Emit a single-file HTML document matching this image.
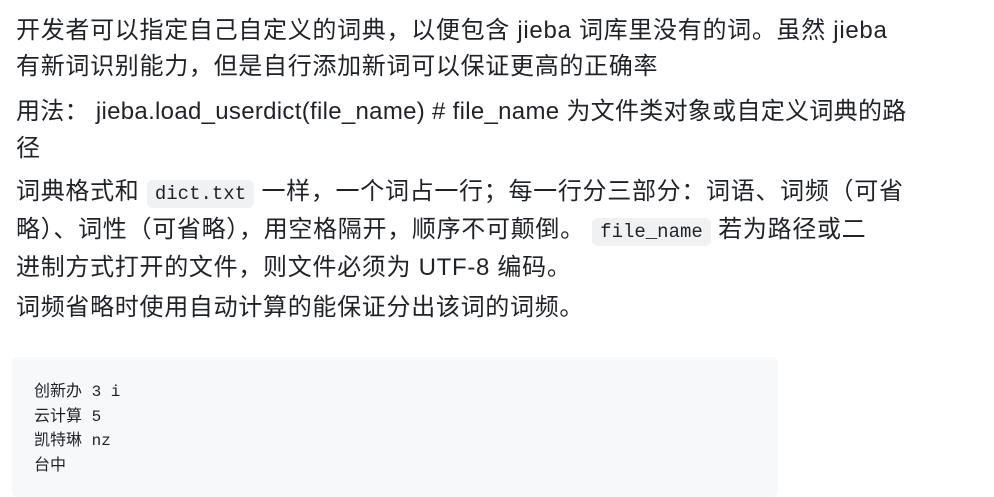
<!DOCTYPE html>
<html><head><meta charset="utf-8"><style>
body{margin:0;background:#fff;width:994px;height:489px;overflow:hidden;position:relative;font-family:"Liberation Sans","Noto Sans CJK SC",sans-serif;color:#1f2328;font-size:24px;}
.l{position:absolute;left:16px;white-space:nowrap;line-height:37px;height:37px;letter-spacing:0.7px;}
code{font-family:"Liberation Mono","Noto Sans CJK SC",monospace;font-size:19px;background:#eff1f3;border-radius:6px;padding:3px 8px;letter-spacing:0;}
.pre{position:absolute;left:12px;top:357px;width:766px;height:140px;background:#f6f8fa;border-radius:6px;}
.c{position:absolute;left:34px;font-family:"Liberation Mono","Noto Sans CJK SC",monospace;font-size:16px;line-height:24.5px;white-space:pre;color:#1f2328;}
</style></head><body>
<div class="l" style="top:12px">开发者可以指定自己自定义的词典，以便包含 jieba 词库里没有的词。虽然 jieba</div>
<div class="l" style="top:48px">有新词识别能力，但是自行添加新词可以保证更高的正确率</div>
<div class="l" style="top:93px;letter-spacing:0.3px">用法： jieba.load_userdict(file_name) # file_name 为文件类对象或自定义词典的路</div>
<div class="l" style="top:130px">径</div>
<div class="l" style="top:173px">词典格式和 <code>dict.txt</code> 一样，一个词占一行；每一行分三部分：词语、词频（可省</div>
<div class="l" style="top:211px">略）、词性（可省略），用空格隔开，顺序不可颠倒。 <code>file_name</code> 若为路径或二</div>
<div class="l" style="top:249px">进制方式打开的文件，则文件必须为 UTF-8 编码。</div>
<div class="l" style="top:289px">词频省略时使用自动计算的能保证分出该词的词频。</div>
<div class="pre"></div>
<div class="c" style="top:380px">创新办 3 i
云计算 5
凯特琳 nz
台中</div>
</body></html>
